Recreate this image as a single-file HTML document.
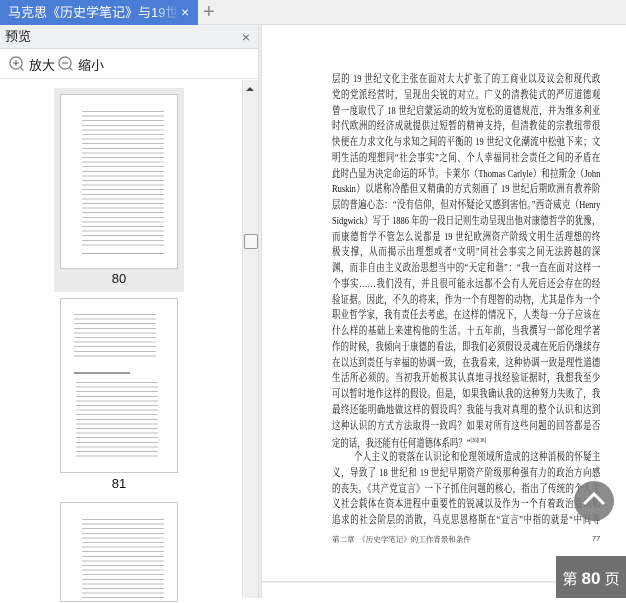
<!DOCTYPE html>
<html><head><meta charset="utf-8"><style>
*{margin:0;padding:0;box-sizing:border-box}
body{width:626px;height:598px;overflow:hidden;background:#fff;font-family:"Liberation Sans","Noto Sans CJK SC",sans-serif;position:relative}
.abs{position:absolute}
.tabbar{left:0;top:0;width:626px;height:25px;background:#f0f0f0;border-bottom:1px solid #dcdcdc}
.tab{left:0;top:0;width:198px;height:25px;background:#4a7dd6;color:#fff;font-size:13px;line-height:25px;padding-left:8px;white-space:nowrap;overflow:hidden}
.plus{left:203px;top:0;font-size:20px;color:#888;line-height:24px}
.lp{left:0;top:25px;width:258px;height:573px;background:#fff}
.hdr{left:0;top:25px;width:258px;height:24px;background:#eef0f3;border-bottom:1px solid #dcdcdc;font-size:13px;line-height:24px;padding-left:5px;color:#222}
.tool{left:0;top:49px;width:258px;height:30px;border-bottom:1px solid #e4e4e4;font-size:13px;color:#222}
.sb{left:242px;top:80px;width:16px;height:518px;background:#f0f0f0;border-left:1px solid #e2e2e2}
.sep{left:258px;top:25px;width:4px;height:573px;background:#f0f0f0;border-left:1px solid #dcdcdc;border-right:1px solid #dcdcdc}
.card{background:#ebebeb}
.pg{background:#fff;border:1px solid #c9c9c9}
.tl{background:repeating-linear-gradient(#888 0 1px,transparent 1px 4.6px);opacity:.55}
.main{left:332px;top:72px;width:344px;transform:scaleX(0.78);transform-origin:0 0;font-family:"Liberation Serif","Noto Serif CJK SC",serif;font-size:10.8px;color:#111}
.main div{height:15.75px;line-height:15.75px;text-align:justify;text-align-last:justify;white-space:nowrap}
</style></head><body>
<div class="abs tabbar"></div>
<div class="abs tab"><span style="display:inline-block;width:172px;overflow:hidden;vertical-align:top;-webkit-mask-image:linear-gradient(90deg,#000 85%,transparent)">马克思《历史学笔记》与19世纪文化</span></div>
<div class="abs" style="left:181px;top:0;color:#fff;font-size:14px;line-height:25px">×</div>
<div class="abs plus">+</div>
<div class="abs lp"></div>
<div class="abs hdr">预览<span style="position:absolute;right:8px;top:0;color:#666;font-size:14px">×</span></div>
<div class="abs tool">
<svg class="abs" style="left:9px;top:7px" width="16" height="16"><circle cx="7" cy="7" r="6" fill="none" stroke="#777" stroke-width="1.2"/><path d="M4 7h6M7 4v6M11.5 11.5l3 3" stroke="#777" stroke-width="1.2"/></svg>
<span class="abs" style="left:29px;top:6px">放大</span>
<svg class="abs" style="left:58px;top:7px" width="16" height="16"><circle cx="7" cy="7" r="6" fill="none" stroke="#777" stroke-width="1.2"/><path d="M4 7h6M11.5 11.5l3 3" stroke="#777" stroke-width="1.2"/></svg>
<span class="abs" style="left:78px;top:6px">缩小</span>
</div>
<div class="abs sb"><div class="abs" style="left:3px;top:7px;width:0;height:0;border-left:4px solid transparent;border-right:4px solid transparent;border-bottom:4px solid #444"></div>
<div class="abs" style="left:1px;top:154px;width:14px;height:15px;background:#f7f7f7;border:1px solid #999;border-radius:2px"></div></div>
<div class="abs sep"></div>

<div class="abs card" style="left:54px;top:88px;width:130px;height:204px"></div>
<div class="abs pg" style="left:60px;top:94px;width:118px;height:175px"></div>
<div class="abs tl" style="left:82px;top:111px;width:82px;height:113px"></div>
<div class="abs tl" style="left:82px;top:226px;width:82px;height:22px"></div>
<div class="abs" style="left:82px;top:253px;width:82px;height:1px;background:#aaa"></div>
<div class="abs" style="left:54px;top:271px;width:130px;text-align:center;font-size:13px;color:#111">80</div>

<div class="abs pg" style="left:60px;top:298px;width:118px;height:175px"></div>
<div class="abs tl" style="left:74px;top:314px;width:82px;height:45px"></div>
<div class="abs" style="left:74px;top:372px;width:56px;height:2px;background:#999"></div>
<div class="abs tl" style="left:76px;top:382px;width:82px;height:78px"></div>
<div class="abs" style="left:54px;top:476px;width:130px;text-align:center;font-size:13px;color:#111">81</div>
<div class="abs pg" style="left:60px;top:502px;width:118px;height:100px"></div>
<div class="abs tl" style="left:82px;top:519px;width:82px;height:80px"></div>

<div class="abs main">
<div>层的 19 世纪文化主张在面对大大扩张了的工商业以及议会和现代政</div>
<div>党的党派经营时，呈现出尖锐的对立。广义的清教徒式的严厉道德观</div>
<div>曾一度取代了 18 世纪启蒙运动的较为宽松的道德规范，并为维多利亚</div>
<div>时代欧洲的经济成就提供过短暂的精神支持，但清教徒的宗教纽带很</div>
<div>快便在力求文化与求知之间的平衡的 19 世纪文化潮流中松弛下来；文</div>
<div>明生活的理想同“社会事实”之间、个人幸福同社会责任之间的矛盾在</div>
<div>此时凸显为决定命运的环节。卡莱尔（Thomas Carlyle）和拉斯金（John</div>
<div>Ruskin）以堪称冷酷但又精确的方式刻画了 19 世纪后期欧洲有教养阶</div>
<div>层的普遍心态：“没有信仰，但对怀疑论又感到害怕。”西奇威克（Henry</div>
<div>Sidgwick）写于 1886 年的一段日记则生动呈现出他对康德哲学的犹豫，</div>
<div>而康德哲学不管怎么说都是 19 世纪欧洲资产阶级文明生活理想的终</div>
<div>极支撑，从而揭示出理想或者“文明”同社会事实之间无法跨越的深</div>
<div>渊，而非自由主义政治思想当中的“天定和谐”：“我一直在面对这样一</div>
<div>个事实……我们没有，并且很可能永远都不会有人死后还会存在的经</div>
<div>验证据。因此，不久的将来，作为一个有理智的动物，尤其是作为一个</div>
<div>职业哲学家，我有责任去考虑，在这样的情况下，人类每一分子应该在</div>
<div>什么样的基础上来建构他的生活。十五年前，当我撰写一部伦理学著</div>
<div>作的时候，我倾向于康德的看法，即我们必须假设灵魂在死后仍继续存</div>
<div>在以达到责任与幸福的协调一致，在我看来，这种协调一致是理性道德</div>
<div>生活所必须的。当初我开始极其认真地寻找经验证据时，我想我至少</div>
<div>可以暂时地作这样的假设。但是，如果我确认我的这种努力失败了，我</div>
<div>最终还能明确地做这样的假设吗？我能与我对真理的整个认识和达到</div>
<div>这种认识的方式方法取得一致吗？如果对所有这些问题的回答都是否</div>
<div style="text-align-last:left">定的话，我还能有任何道德体系吗？”<sup style="font-size:6px">[36][38]</sup></div>
<div style="padding-left:28px">个人主义的衰落在认识论和伦理领域所造成的这种消极的怀疑主</div>
<div>义，导致了 18 世纪和 19 世纪早期资产阶级那种强有力的政治方向感</div>
<div>的丧失。《共产党宣言》一下子抓住问题的核心，指出了传统的个人主</div>
<div>义社会载体在资本进程中重要性的锐减以及作为一个有着政治意识和</div>
<div>追求的社会阶层的消散，马克思恩格斯在“宣言”中指的就是“中间等</div>
</div>
<div class="abs" style="left:332px;top:534px;font-size:7.5px;color:#333;font-family:'Liberation Serif','Noto Serif CJK SC',serif">第二章　《历史学笔记》的工作背景和条件</div>
<div class="abs" style="left:592px;top:534px;font-size:7.5px;color:#333">77</div>
<div class="abs" style="left:262px;top:581px;width:294px;height:2px;border-top:1px solid #ddd;border-bottom:1px solid #eee"></div>
<div class="abs" style="left:574px;top:481px;width:40px;height:40px;border-radius:50%;background:rgba(120,120,120,.85)"></div>
<svg class="abs" style="left:582px;top:491px" width="24" height="16"><path d="M2 13L12 3l10 10" fill="none" stroke="#fff" stroke-width="3"/></svg>
<div class="abs" style="left:556px;top:556px;width:70px;height:42px;background:#707070;color:#fff;font-size:15px;line-height:46px;text-align:center;white-space:nowrap">第 <b style="font-size:17px">80</b> 页</div>
</body></html>
